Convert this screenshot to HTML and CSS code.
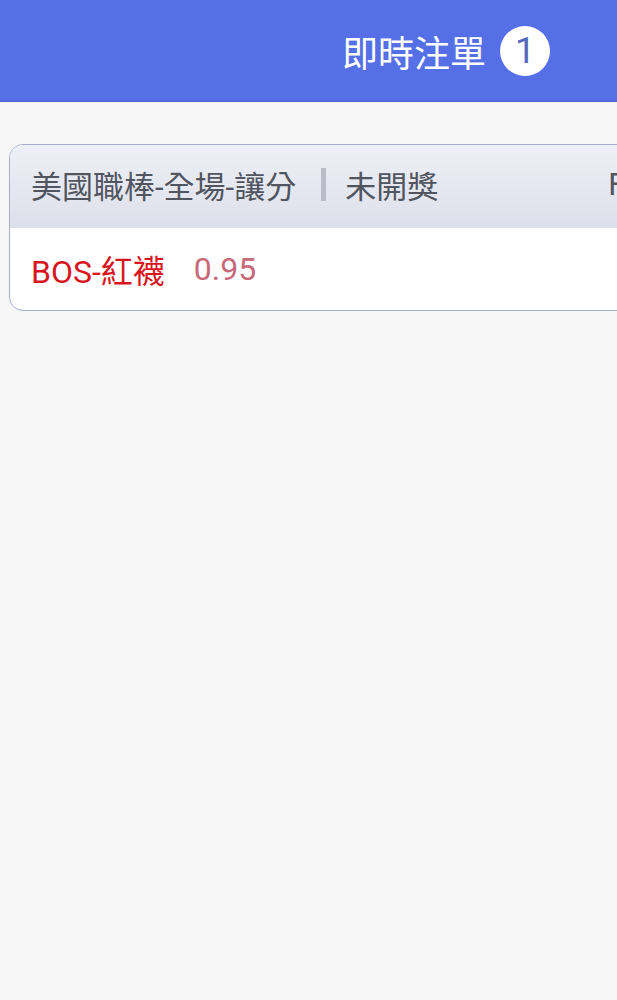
FILE: index.html
```html
<!DOCTYPE html>
<html lang="zh-Hant">
  <head>
    <meta charset="UTF-8" />
    <title>即時注單</title>
    <link rel="stylesheet" href="styles.css">
  </head>
  <body>
    <div class="app">
      <header class="topbar">
        <h1 class="title">即時注單</h1>
        <span class="badge">1</span>
      </header>

      <div class="list">
        <div class="bet-card">
          <div class="bet-head">
            <span class="bet-type">美國職棒-全場-讓分</span>
            <span class="divider"></span>
            <span class="bet-status">未開獎</span>
            <span class="bet-extra">F</span>
          </div>
          <div class="bet-body">
            <span class="bet-pick">BOS-紅襪</span>
            <span class="bet-odds">0.95</span>
          </div>
        </div>
      </div>
    </div>
  </body>
</html>
```

FILE: styles.css
```css
html,
body {
  margin: 0;
  overflow-x: hidden;
  background: #f6f6f7;
}
body {
  font-family: Roboto, "Noto Sans CJK TC", sans-serif;
}
.app {
  width: 892px;
}
.topbar {
  height: 102px;
  background: #5570e7;
  border-bottom: 1px solid #4a63d0;
  box-sizing: border-box;
  display: flex;
  align-items: center;
  justify-content: center;
  gap: 14px;
  color: white;
}
.title {
  margin: 0;
  font-size: 36px;
  font-weight: 400;
}
.badge {
  width: 50px;
  height: 50px;
  border-radius: 50%;
  background: white;
  color: #5468bc;
  font-size: 36px;
  display: flex;
  align-items: center;
  justify-content: center;
}
.list {
  padding: 42px 9px;
}
.bet-card {
  border: 1px solid #a7accb;
  border-radius: 14px;
  overflow: hidden;
  background: white;
}
.bet-head {
  height: 83px;
  display: flex;
  align-items: center;
  padding: 0 21px 4px;
  box-sizing: border-box;
  background: linear-gradient(#eef0f7, #dde0ea);
  color: #505560;
  font-size: 31px;
}
.divider {
  width: 5px;
  height: 33px;
  background: #babdc7;
  margin: 0 19px 0 25px;
}
.bet-extra {
  margin-left: 170px;
}
.bet-body {
  height: 82px;
  display: flex;
  align-items: center;
  padding: 0 21px;
  font-size: 31px;
}
.bet-pick {
  color: #d8161e;
  font-size: 32px;
}
.bet-odds {
  color: #c8697a;
  font-size: 32px;
  margin-left: 29px;
}
```
